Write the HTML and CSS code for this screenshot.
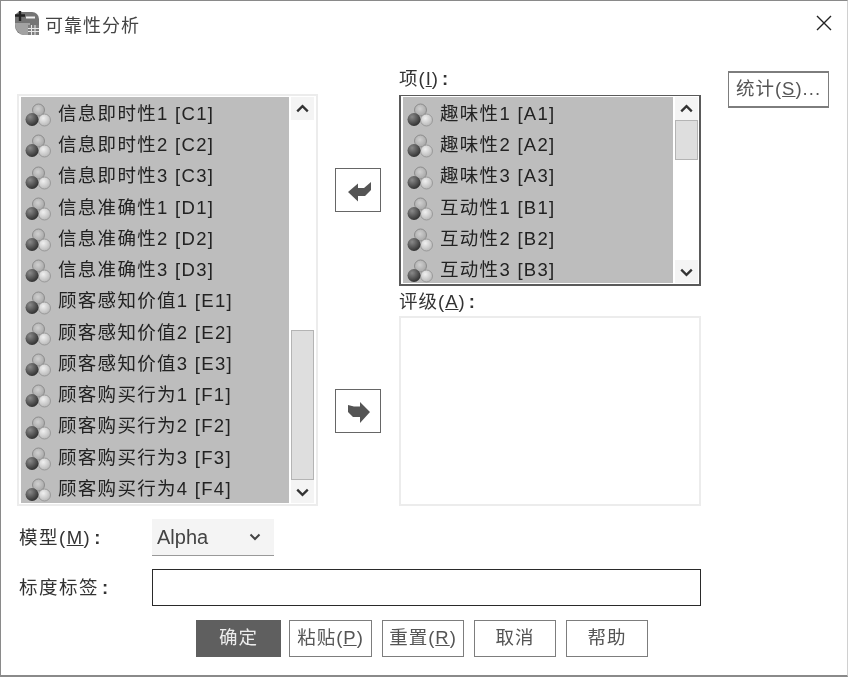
FILE: index.html
```html
<!DOCTYPE html>
<html lang="zh">
<head>
<meta charset="utf-8">
<title>可靠性分析</title>
<link rel="stylesheet" href="styles.css">
</head>
<body>
<svg class="defs" width="0" height="0" aria-hidden="true">
  <defs>
    <radialGradient id="gd" cx="35%" cy="30%" r="75%"><stop offset="0" stop-color="#8a8a8a"/><stop offset="1" stop-color="#2e2e2e"/></radialGradient>
    <radialGradient id="gl" cx="40%" cy="35%" r="70%"><stop offset="0" stop-color="#f0f0f0"/><stop offset="1" stop-color="#b5b5b5"/></radialGradient>
    <radialGradient id="gt" cx="45%" cy="40%" r="70%"><stop offset="0" stop-color="#d0d0d0"/><stop offset="1" stop-color="#a0a0a0"/></radialGradient>
    <symbol id="balls" viewBox="0 0 26 24">
      <circle cx="13.5" cy="7" r="6" fill="url(#gt)" stroke="#8c8c8c" stroke-width="1"/>
      <circle cx="19.500" cy="17" r="6" fill="url(#gl)" stroke="#9a9a9a" stroke-width="1"/>
      <circle cx="7" cy="16.5" r="6.500" fill="url(#gd)"/>
    </symbol>
    <symbol id="up" viewBox="0 0 24 24"><path d="M6.5 15 12 9.5 17.5 15" fill="none" stroke="#333" stroke-width="2.4"/></symbol>
    <symbol id="down" viewBox="0 0 24 24"><path d="M6.5 10 12 15.5 17.5 10" fill="none" stroke="#333" stroke-width="2.4"/></symbol>
  </defs>
</svg>
<div class="window">
  <div class="titlebar">
    <div class="title-left">
      <svg class="title-icon" width="26" height="26" viewBox="0 0 26 26">
        <path d="M6 2h12a7 7 0 0 1 7 7v16H10a9 9 0 0 1-9-9V7a5 5 0 0 1 5-5z" fill="#747474"/>
        <path d="M1 14a11 11 0 0 0 9 11h6V13H1z" fill="#a2a2a2"/>
        <path d="M6 1v10M1 5.500h10" stroke="#222" stroke-width="2.400"/>
        <path d="M12 7.500h9" stroke="#f0f0f0" stroke-width="2"/>
        <rect x="14" y="15" width="11" height="10" fill="#7e7e7e"/>
        <path d="M14 18.500h11M14 21.500h11M17.500 15v10M21 15v10" stroke="#e8e8e8" stroke-width="1"/>
      </svg>
      <span class="title-text">可靠性分析</span>
    </div>
    <svg class="close" width="18" height="18" viewBox="0 0 18 18"><path d="M2 2l14 14M16 2 2 16" stroke="#222" stroke-width="1.400"/></svg>
  </div>

  <div class="main">
    <div class="list list-source">
      <div class="rows">
        <div class="row"><svg class="ball"><use href="#balls"/></svg>信息即时性1 [C1]</div>
        <div class="row"><svg class="ball"><use href="#balls"/></svg>信息即时性2 [C2]</div>
        <div class="row"><svg class="ball"><use href="#balls"/></svg>信息即时性3 [C3]</div>
        <div class="row"><svg class="ball"><use href="#balls"/></svg>信息准确性1 [D1]</div>
        <div class="row"><svg class="ball"><use href="#balls"/></svg>信息准确性2 [D2]</div>
        <div class="row"><svg class="ball"><use href="#balls"/></svg>信息准确性3 [D3]</div>
        <div class="row"><svg class="ball"><use href="#balls"/></svg>顾客感知价值1 [E1]</div>
        <div class="row"><svg class="ball"><use href="#balls"/></svg>顾客感知价值2 [E2]</div>
        <div class="row"><svg class="ball"><use href="#balls"/></svg>顾客感知价值3 [E3]</div>
        <div class="row"><svg class="ball"><use href="#balls"/></svg>顾客购买行为1 [F1]</div>
        <div class="row"><svg class="ball"><use href="#balls"/></svg>顾客购买行为2 [F2]</div>
        <div class="row"><svg class="ball"><use href="#balls"/></svg>顾客购买行为3 [F3]</div>
        <div class="row"><svg class="ball"><use href="#balls"/></svg>顾客购买行为4 [F4]</div>
      </div>
      <div class="scrollbar">
        <div class="sb-btn"><svg width="23" height="23"><use href="#up"/></svg></div>
        <div class="sb-track sb-track-long"></div>
        <div class="sb-thumb sb-thumb-long"></div>
        <div class="sb-btn"><svg width="23" height="23"><use href="#down"/></svg></div>
      </div>
    </div>

    <div class="arrows">
      <button class="arrow arrow-back" type="button">
        <svg width="46" height="43" viewBox="0 0 46 43"><path d="M12 23 22 14.500V19H28L35 13V21L29 27H22V32.500Z" fill="#555"/></svg>
      </button>
      <button class="arrow arrow-forward" type="button">
        <svg width="46" height="43" viewBox="0 0 46 43"><path d="M34 22 24 12V16.500H18L12 15V22L17 27H24V33Z" fill="#555"/></svg>
      </button>
    </div>

    <div class="targets">
      <div class="field-label field-items">项(<u>I</u>)<b>:</b></div>
      <div class="list list-items">
        <div class="rows">
          <div class="row"><svg class="ball"><use href="#balls"/></svg>趣味性1 [A1]</div>
          <div class="row"><svg class="ball"><use href="#balls"/></svg>趣味性2 [A2]</div>
          <div class="row"><svg class="ball"><use href="#balls"/></svg>趣味性3 [A3]</div>
          <div class="row"><svg class="ball"><use href="#balls"/></svg>互动性1 [B1]</div>
          <div class="row"><svg class="ball"><use href="#balls"/></svg>互动性2 [B2]</div>
          <div class="row"><svg class="ball"><use href="#balls"/></svg>互动性3 [B3]</div>
        </div>
        <div class="scrollbar">
          <div class="sb-btn"><svg width="23" height="23"><use href="#up"/></svg></div>
          <div class="sb-thumb sb-thumb-short"></div>
          <div class="sb-track sb-track-fill"></div>
          <div class="sb-btn"><svg width="23" height="23"><use href="#down"/></svg></div>
        </div>
      </div>
      <div class="field-label field-rating">评级(<u>A</u>)<b>:</b></div>
      <div class="rating-box"></div>
    </div>

    <button class="btn btn-stats" type="button">统计(<u>S</u>)...</button>
  </div>

  <div class="form-row form-model">
    <span class="form-label">模型(<u>M</u>)<b>:</b></span>
    <div class="select">
      <span>Alpha</span>
      <svg width="12" height="8" viewBox="0 0 12 8"><path d="M1.500 1.500 6 6 10.500 1.500" fill="none" stroke="#444" stroke-width="2"/></svg>
    </div>
  </div>
  <div class="form-row form-scale">
    <span class="form-label">标度标签<b>:</b></span>
    <div class="text-input"></div>
  </div>

  <div class="actions">
    <button class="btn btn-ok" type="button">确定</button>
    <button class="btn btn-paste" type="button">粘贴(<u>P</u>)</button>
    <button class="btn btn-reset" type="button">重置(<u>R</u>)</button>
    <button class="btn btn-cancel" type="button">取消</button>
    <button class="btn btn-help" type="button">帮助</button>
  </div>
</div>
</body>
</html>
```

FILE: styles.css
```css
* { box-sizing: border-box; }
html, body { margin: 0; padding: 0; background: #fff; }
body {
  width: 850px;
  height: 678px;
  overflow: hidden;
  font-family: "Liberation Sans", "Noto Sans CJK SC", sans-serif;
  font-size: 18.5px;
  letter-spacing: 1.3px;
  color: #2a2a2a;
  filter: blur(0.45px);
}
.defs { display: block; height: 0; }
.window {
  width: 848px;
  height: 677px;
  border: 1px solid #8a8a8a;
  border-width: 1px 1px 2px 1px;
  background: #fff;
  border-right-color: #d0d0d0;
}
.titlebar {
  height: 69px;
  display: flex;
  justify-content: space-between;
  align-items: flex-start;
  padding: 9px 12px 0 13px;
}
.title-left { display: flex; align-items: flex-start; gap: 5px; }
.title-icon { display: block; }
.title-text { font-size: 18px; line-height: 26px; color: #444; letter-spacing: 1px; margin-top: 3px; }
.close { display: block; margin-top: 4px; margin-right: 2px; }

.main { display: flex; align-items: flex-start; height: 436px; }

.list { display: flex; overflow: hidden; background: #fff; }
.list-source {
  width: 301px;
  height: 412px;
  margin: 24px 0 0 16px;
  border: 2px solid #ececec;
  padding: 1px 2px 1px 2px;
}
.list-items {
  height: 191px;
  border: 1px solid #5a5a5a;
  border-width: 1px 2px 2px 2px;
  padding: 1px 1px 1px 2px;
}
.rows { flex: 1; background: #bdbdbd; overflow: hidden; min-width: 0; padding-top: 1.5px; }
.row {
  display: flex;
  align-items: center;
  height: 31.25px;
  padding-left: 4px;
  white-space: nowrap;
  line-height: 1;
  color: #222;
}
.ball { width: 26px; height: 24px; flex: none; margin-right: 7px; margin-top: 2px; }

.scrollbar { width: 23px; flex: none; margin-left: 2px; display: flex; flex-direction: column; background: #fff; }
.sb-btn { height: 23px; flex: none; background: #f4f4f4; display: flex; align-items: center; justify-content: center; }
.sb-track { background: #fff; }
.sb-track-long { height: 210px; }
.sb-thumb { background: #dedede; border: 1px solid #b4b4b4; }
.sb-thumb-long { height: 150px; }
.sb-thumb-short { height: 40px; }
.sb-track-fill { flex: 1; }

.arrows { width: 46px; margin-left: 17px; padding-top: 98px; display: flex; flex-direction: column; gap: 177px; }
.arrow {
  width: 46px;
  height: 44px;
  padding: 0;
  border: 1px solid #666;
  background: #fff;
  display: block;
}
.arrow svg { display: block; }

.targets { width: 302px; margin-left: 18px; display: flex; flex-direction: column; }
.field-label { line-height: 18px; font-size: 18.5px; color: #333; letter-spacing: 1px; }
.field-label b, .form-label b { font-weight: 700; margin-left: 3px; }
.field-items { height: 25px; }
.field-rating { height: 30px; padding-top: 6px; line-height: 20px; }
.rating-box { height: 190px; border: 2px solid #ececec; background: #fff; }

.btn {
  font: inherit;
  letter-spacing: 1px;
  font-size: 18.5px;
  color: #555;
  background: #fff;
  border: 1px solid #7d7d7d;
  padding: 0;
  height: 37px;
  line-height: 1;
}
.btn-stats { width: 101px; margin: 1px 0 0 27px; border-width: 2px 1px; }

.form-row { display: flex; align-items: center; height: 37px; padding-left: 18px; }
.form-model { margin-top: 13px; }
.form-scale { margin-top: 13px; }
.form-label { width: 133px; flex: none; color: #333; letter-spacing: 1.5px; font-size: 18.5px; line-height: 1; padding-top: 2px; }
.select {
  width: 122px;
  height: 37px;
  background: #f4f4f4;
  border-bottom: 1px solid #999;
  display: flex;
  align-items: center;
  justify-content: space-between;
  padding: 0 13px 0 5px;
  font-size: 20px;
  letter-spacing: 0;
  color: #444;
}
.text-input { width: 549px; height: 37px; border: 1px solid #2a2a2a; background: #fff; }

.actions { display: flex; margin-top: 14px; padding-left: 195px; }
.btn-ok { width: 85px; background: #5f5f5f; color: #ececec; border-color: #5f5f5f; }
.btn-paste { width: 83px; margin-left: 8px; }
.btn-reset { width: 82px; margin-left: 10px; }
.btn-cancel { width: 82px; margin-left: 10px; }
.btn-help { width: 82px; margin-left: 10px; }
```
